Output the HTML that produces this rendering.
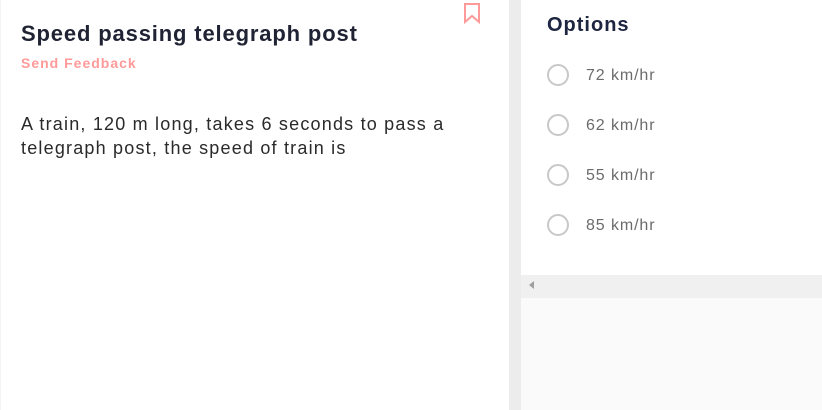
<!DOCTYPE html>
<html><head><style>
*{margin:0;padding:0;box-sizing:border-box}
body{width:822px;height:410px;overflow:hidden;background:#fff;font-family:"Liberation Sans",sans-serif;position:relative}
.abs{position:absolute;white-space:nowrap}
.o{font-size:16px;color:#6b6b6b;letter-spacing:0.9px}
</style></head><body>
<div class="abs" style="left:0;top:0;width:1px;height:410px;background:#f4f4f4"></div>
<div class="abs" style="left:21px;top:21px;font-size:22px;font-weight:bold;color:#1f2333;letter-spacing:0.85px">Speed passing telegraph post</div>
<div class="abs" style="left:21px;top:55px;font-size:14px;font-weight:bold;color:#ff9a9a;letter-spacing:1px">Send Feedback</div>
<svg class="abs" style="left:462px;top:2px" width="20" height="22" viewBox="0 0 20 22"><path d="M3 2H17V20L10 14L3 20Z" fill="none" stroke="#ff9a9a" stroke-width="2"/></svg>
<div class="abs" style="left:21px;top:112px;font-size:18px;line-height:24px;color:#2a2a2a;letter-spacing:1.2px">A train, 120 m long, takes 6 seconds to pass a<br>telegraph post, the speed of train is</div>
<div class="abs" style="left:509px;top:0;width:12px;height:410px;background:#ececec"></div>
<div class="abs" style="left:521px;top:275px;width:301px;height:23px;background:#f0f0f0"></div>
<div class="abs" style="left:521px;top:298px;width:301px;height:112px;background:#fafafa"></div>
<div class="abs" style="left:529px;top:281px;width:0;height:0;border-top:4px solid transparent;border-bottom:4px solid transparent;border-right:5px solid #a0a0a0"></div>
<div class="abs" style="left:547px;top:14px;font-size:20px;font-weight:bold;color:#1e2540;letter-spacing:1px">Options</div>
<svg class="abs" style="left:546px;top:63px" width="24" height="175"><g fill="none" stroke="#c8c8c8" stroke-width="2"><circle cx="12" cy="12" r="10"/><circle cx="12" cy="62" r="10"/><circle cx="12" cy="112" r="10"/><circle cx="12" cy="162" r="10"/></g></svg>
<div class="abs o" style="left:586px;top:67px">72 km/hr</div>
<div class="abs o" style="left:586px;top:117px">62 km/hr</div>
<div class="abs o" style="left:586px;top:167px">55 km/hr</div>
<div class="abs o" style="left:586px;top:217px">85 km/hr</div>
</body></html>
